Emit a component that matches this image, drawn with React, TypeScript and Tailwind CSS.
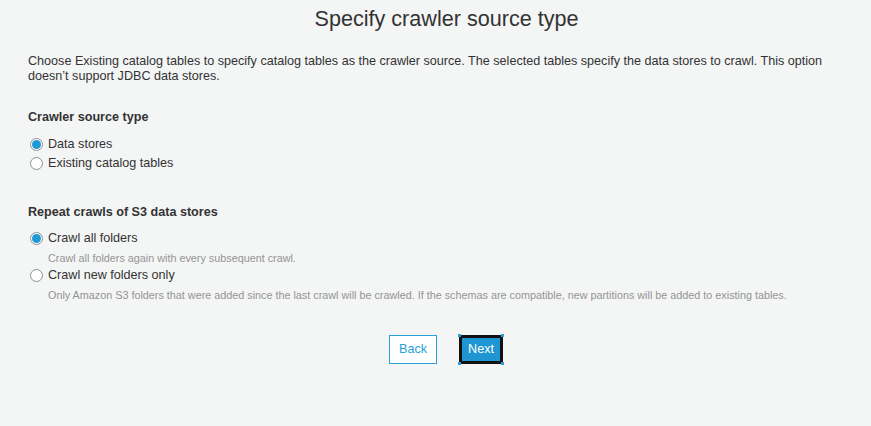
import React from "react";

function Radio({ checked }: { checked: boolean }) {
  return (
    <span className="inline-flex h-[13px] w-[13px] shrink-0 items-center justify-center rounded-full border border-[#8f8f8f] bg-white">
      {checked && <span className="h-[9px] w-[9px] rounded-full bg-[#1e9ad6]" />}
    </span>
  );
}

function Option({ label, checked, desc }: { label: string; checked: boolean; desc?: string }) {
  return (
    <div>
      <label className="flex h-[19px] items-center gap-[5px] pl-[2px]">
        <Radio checked={checked} />
        <span className="text-[12.6px] text-[#333]">{label}</span>
      </label>
      {desc && <div className="h-[18px] pl-[20px] pt-[2px] text-[10.8px] leading-[16px] text-[#949494]">{desc}</div>}
    </div>
  );
}

export default function App() {
  return (
    <div
      className="min-h-[426px] w-full bg-[#f4f5f5] text-[#333]"
      style={{ fontFamily: '"Liberation Sans", Arial, sans-serif' }}
    >
      <h1 className="pl-[22px] pt-[5px] text-center text-[21.6px] leading-[28px] text-[#333]">Specify crawler source type</h1>
      <div className="px-[28px]">
        <p className="mt-[21px] text-[12.6px] leading-[15px] text-[#333]">
          Choose Existing catalog tables to specify catalog tables as the crawler source. The selected tables specify the data stores to crawl. This option doesn’t support JDBC data stores.
        </p>
        <h2 className="mt-[24px] text-[12.6px] font-bold leading-[18px]">Crawler source type</h2>
        <div className="mt-[9px]">
          <Option label="Data stores" checked />
          <Option label="Existing catalog tables" checked={false} />
        </div>
        <h2 className="mt-[30px] text-[12.6px] font-bold leading-[18px]">Repeat crawls of S3 data stores</h2>
        <div className="mt-[8px]">
          <Option label="Crawl all folders" checked desc="Crawl all folders again with every subsequent crawl." />
          <Option
            label="Crawl new folders only"
            checked={false}
            desc="Only Amazon S3 folders that were added since the last crawl will be crawled. If the schemas are compatible, new partitions will be added to existing tables."
          />
        </div>
        <div className="mt-[32px] flex justify-center gap-[22px] pl-[21px]">
          <button className="h-[29px] w-[48px] border border-[#2a9fd8] bg-white text-[12.6px] text-[#2a9fd8]">Back</button>
          <div className="relative">
            <button className="h-[29px] w-[44px] rounded-[3px] border-[3px] border-[#111] bg-[#1f96d3] text-[12.6px] text-white">Next</button>
            <span className="absolute left-[-1px] top-[-1px] h-[3px] w-[3px] bg-[#2a9fd8]" />
            <span className="absolute right-[-1px] top-[-1px] h-[3px] w-[3px] bg-[#2a9fd8]" />
            <span className="absolute bottom-[-1px] left-[-1px] h-[3px] w-[3px] bg-[#2a9fd8]" />
            <span className="absolute bottom-[-1px] right-[-1px] h-[3px] w-[3px] bg-[#2a9fd8]" />
          </div>
        </div>
      </div>
    </div>
  );
}
